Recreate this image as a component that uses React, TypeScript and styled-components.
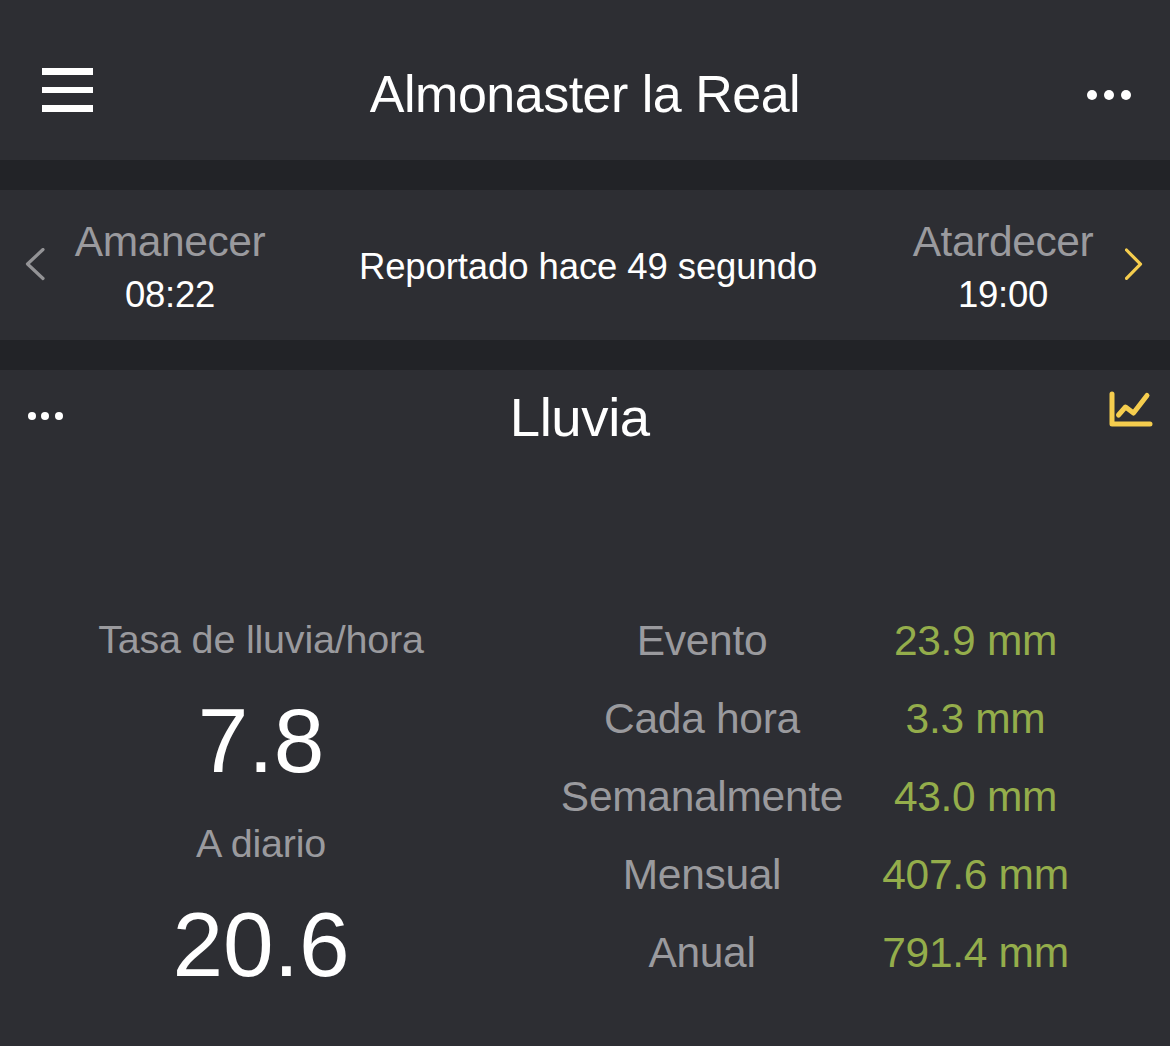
import styled, { createGlobalStyle } from "styled-components";

const totals = [
  { label: "Evento", value: "23.9 mm" },
  { label: "Cada hora", value: "3.3 mm" },
  { label: "Semanalmente", value: "43.0 mm" },
  { label: "Mensual", value: "407.6 mm" },
  { label: "Anual", value: "791.4 mm" },
];

const App = () => {
  return (
    <>
      <GlobalStyle />
      <Page>
        <Header>
          <MenuButton aria-label="Menu">
            <MenuLine />
            <MenuLine />
            <MenuLine />
          </MenuButton>
          <Title>Almonaster la Real</Title>
          <Dots $size={10} $gap={7}>
            <i />
            <i />
            <i />
          </Dots>
        </Header>

        <SunBar>
          <Arrow width="20" height="34" viewBox="0 0 20 34" stroke="#939396">
            <path d="M18 1.5 L2.5 16 L18 30.5" />
          </Arrow>
          <SunTime>
            <SunLabel>Amanecer</SunLabel>
            <Time>08:22</Time>
          </SunTime>
          <Reported>Reportado hace 49 segundo</Reported>
          <SunTime>
            <SunLabel>Atardecer</SunLabel>
            <Time>19:00</Time>
          </SunTime>
          <Arrow width="20" height="34" viewBox="0 0 20 34" stroke="#f5cd4e">
            <path d="M1.5 2 L15.5 16.2 L1.5 30.4" />
          </Arrow>
        </SunBar>

        <Card>
          <CardHeader>
            <Dots $size={8} $gap={5.6}>
              <i />
              <i />
              <i />
            </Dots>
            <CardTitle>Lluvia</CardTitle>
            <ChartIcon width="44" height="38" viewBox="0 0 44 38">
              <path d="M3 3 V33 H41" />
              <path d="M9.5 24 L16.5 16 L24.5 22 L38 4.5" />
            </ChartIcon>
          </CardHeader>
          <CardBody>
            <Rates>
              <RateLabel>Tasa de lluvia/hora</RateLabel>
              <RateValue>7.8</RateValue>
              <RateLabel>A diario</RateLabel>
              <RateValue>20.6</RateValue>
            </Rates>
            <Totals>
              {totals.map((item) => (
                <TotalRow key={item.label}>
                  <TotalLabel>{item.label}</TotalLabel>
                  <TotalValue>{item.value}</TotalValue>
                </TotalRow>
              ))}
            </Totals>
          </CardBody>
        </Card>
      </Page>
    </>
  );
};

const GlobalStyle = createGlobalStyle`
  * {
    box-sizing: border-box;
  }

  body {
    margin: 0;
    background-color: #222327;
    color: #ffffff;
    font-family: "Liberation Sans", Arial, sans-serif;
  }
`;

const Page = styled.div`
  display: flex;
  flex-direction: column;
  gap: 30px;
  height: 1046px;
  overflow: hidden;
`;

const Header = styled.header`
  display: grid;
  grid-template-columns: 1fr auto 1fr;
  align-items: center;
  height: 160px;
  padding: 25px 39px 0 42px;
  background-color: #2d2e33;
`;

const MenuButton = styled.button`
  display: flex;
  flex-direction: column;
  gap: 12px;
  width: 51px;
  margin-bottom: 5px;
  padding: 0;
  border: none;
  background: none;
`;

const MenuLine = styled.span`
  height: 6.5px;
  background-color: #ffffff;
`;

const Title = styled.h1`
  margin: 2px 3px 0 0;
  font-size: 52px;
  font-weight: normal;
  line-height: 60px;
  letter-spacing: -0.5px;
`;

const Dots = styled.div<{ $size: number; $gap: number }>`
  display: flex;
  justify-self: end;
  gap: ${({ $gap }) => $gap}px;
  margin-top: 4px;

  i {
    width: ${({ $size }) => $size}px;
    height: ${({ $size }) => $size}px;
    border-radius: 50%;
    background-color: #ffffff;
  }
`;

const SunBar = styled.section`
  display: grid;
  grid-template-columns: 50px 190px 1fr 184px 50px;
  align-items: center;
  height: 150px;
  padding: 0 25px;
  background-color: #2d2e33;
`;

const Arrow = styled.svg`
  fill: none;
  stroke-width: 3.2;
  stroke-linecap: round;
  stroke-linejoin: round;

  &:last-child {
    justify-self: end;
  }
`;

const SunTime = styled.div`
  display: flex;
  flex-direction: column;
  align-items: center;
  padding-top: 6px;
  line-height: 53px;
  white-space: nowrap;
`;

const SunLabel = styled.span`
  color: #9a9a9e;
  font-size: 42.5px;
  letter-spacing: -0.4px;
`;

const Time = styled.span`
  font-size: 36.5px;
  letter-spacing: -0.3px;
`;

const Reported = styled.span`
  padding-top: 4px;
  font-size: 36.5px;
  letter-spacing: -0.1px;
  text-align: center;
`;

const Card = styled.section`
  height: 676px;
  background-color: #2d2e33;
`;

const CardHeader = styled.div`
  display: grid;
  grid-template-columns: 1fr auto 1fr;
  align-items: center;
  height: 94px;
  padding: 0 17px 0 27.5px;

  ${Dots} {
    justify-self: start;
    margin-top: 0;
    margin-bottom: 3px;
  }
`;

const CardTitle = styled.h2`
  margin: 1px 21px 0 0;
  font-size: 54.5px;
  font-weight: normal;
  line-height: 60px;
  letter-spacing: -0.4px;
`;

const ChartIcon = styled.svg`
  justify-self: end;
  margin-bottom: 14px;
  fill: none;
  stroke: #f5cd4e;
  stroke-width: 5;
  stroke-linecap: round;
  stroke-linejoin: round;
`;

const CardBody = styled.div`
  display: grid;
  grid-template-columns: 522px 1fr;
  padding-top: 137px;
`;

const Rates = styled.div`
  display: flex;
  flex-direction: column;
  align-items: center;
  padding-top: 1px;
`;

const RateLabel = styled.span`
  color: #9a9a9e;
  font-size: 39.5px;
  line-height: 74px;
  letter-spacing: -0.2px;
`;

const RateValue = styled.span`
  font-size: 91px;
  line-height: 130px;
`;

const Totals = styled.div`
  display: flex;
  flex-direction: column;
`;

const TotalRow = styled.div`
  display: grid;
  grid-template-columns: 360px 187px;
  height: 78px;
  font-size: 42.5px;
  line-height: 79px;
  text-align: center;
  letter-spacing: -0.3px;
  white-space: nowrap;
`;

const TotalLabel = styled.span`
  color: #9a9a9e;
`;

const TotalValue = styled.span`
  color: #94ad4b;
`;

export default App;
